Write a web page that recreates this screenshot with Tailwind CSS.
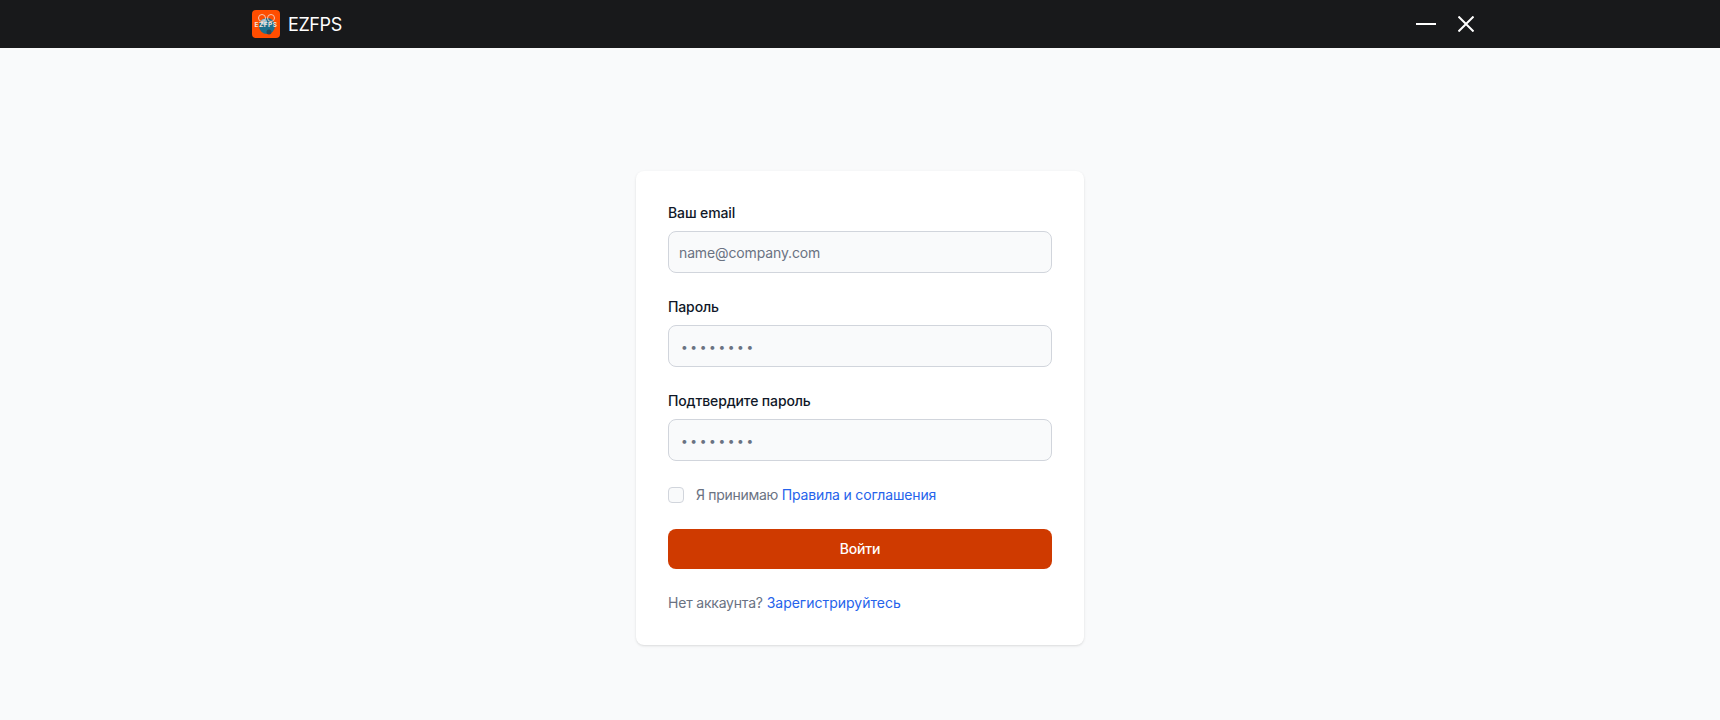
<!DOCTYPE html>
<html lang="ru">
<head>
  <meta charset="UTF-8" />
  <meta name="viewport" content="width=device-width, initial-scale=1.0"/>
  <title>EZFPS</title>
  <script src="https://cdn.jsdelivr.net/npm/@tailwindcss/browser@4"></script>
</head>
<body class="bg-gray-50 h-[720px] overflow-hidden font-['Inter',sans-serif] tracking-[-0.13px]">

  <!-- title bar -->
  <header class="h-12 bg-[#18191b] flex items-center pl-[252px] pr-[246px]">
    <svg class="w-7 h-7" viewBox="0 0 28 28">
      <rect width="28" height="28" rx="4" fill="#ff4d00"/>
      <circle cx="15" cy="16" r="8" fill="#1d6f8c"/>
      <circle cx="12" cy="12" r="3" fill="#8fc3d6"/>
      <circle cx="17" cy="22" r="2.5" fill="#27485a"/>
      <circle cx="10" cy="8" r="3.500" fill="none" stroke="#f3c9b5" stroke-width="1"/>
      <circle cx="19" cy="8" r="3.500" fill="none" stroke="#f3c9b5" stroke-width="1"/>
      <text x="14" y="17" text-anchor="middle" font-family="Inter" font-size="6.500" font-weight="700" letter-spacing="0.500" fill="#f4e4dc">EZFPS</text>
    </svg>
    <span class="ml-2 text-lg text-white tracking-[-0.4px] translate-y-px">EZFPS</span>
    <div class="ml-auto flex items-center gap-[22px]">
      <svg class="w-5 h-4" viewBox="0 0 20 16"><path d="M0 8h20" stroke="#fff" stroke-width="2"/></svg>
      <svg class="w-4 h-4" viewBox="0 0 16 16"><path d="M.5.5l15 15M15.500.5l-15 15" stroke="#fff" stroke-width="2"/></svg>
    </div>
  </header>

  <main class="flex justify-center pt-[123px]">
    <form class="w-md bg-white rounded-lg shadow p-8 flex flex-col">
      <label class="block mb-2 text-sm font-[450] text-gray-900">Ваш email</label>
      <input type="email" placeholder="name@company.com"
        class="w-full h-[42px] px-2.5 bg-gray-50 border border-gray-300 rounded-lg text-sm text-gray-900 placeholder:text-gray-500" />

      <label class="block mt-6 mb-2 text-sm font-[450] text-gray-900">Пароль</label>
      <input type="password" placeholder="••••••••"
        class="w-full h-[42px] px-3 bg-gray-50 border border-gray-300 rounded-lg text-xs tracking-[2.6px] text-gray-900 placeholder:text-gray-500" />

      <label class="block mt-6 mb-2 text-sm font-[450] text-gray-900">Подтвердите пароль</label>
      <input type="password" placeholder="••••••••"
        class="w-full h-[42px] px-3 bg-gray-50 border border-gray-300 rounded-lg text-xs tracking-[2.6px] text-gray-900 placeholder:text-gray-500" />

      <div class="flex items-center mt-6 h-5">
        <span class="w-4 h-4 bg-gray-50 border border-gray-300 rounded"></span>
        <span class="ml-3 text-sm text-gray-500"><span class="tracking-[-0.3px]">Я принимаю</span> <a href="#" class="text-[#2563eb] tracking-[-0.17px]">Правила и соглашения</a></span>
      </div>

      <button type="button" class="mt-6 h-10 w-full bg-[#cf3a00] rounded-lg text-sm font-[450] text-white">Войти</button>

      <p class="mt-6 text-sm text-gray-500"><span class="tracking-[-0.2px]">Нет аккаунта?</span> <a href="#" class="text-[#2563eb] tracking-normal">Зарегистрируйтесь</a></p>
    </form>
  </main>
</body>
</html>
